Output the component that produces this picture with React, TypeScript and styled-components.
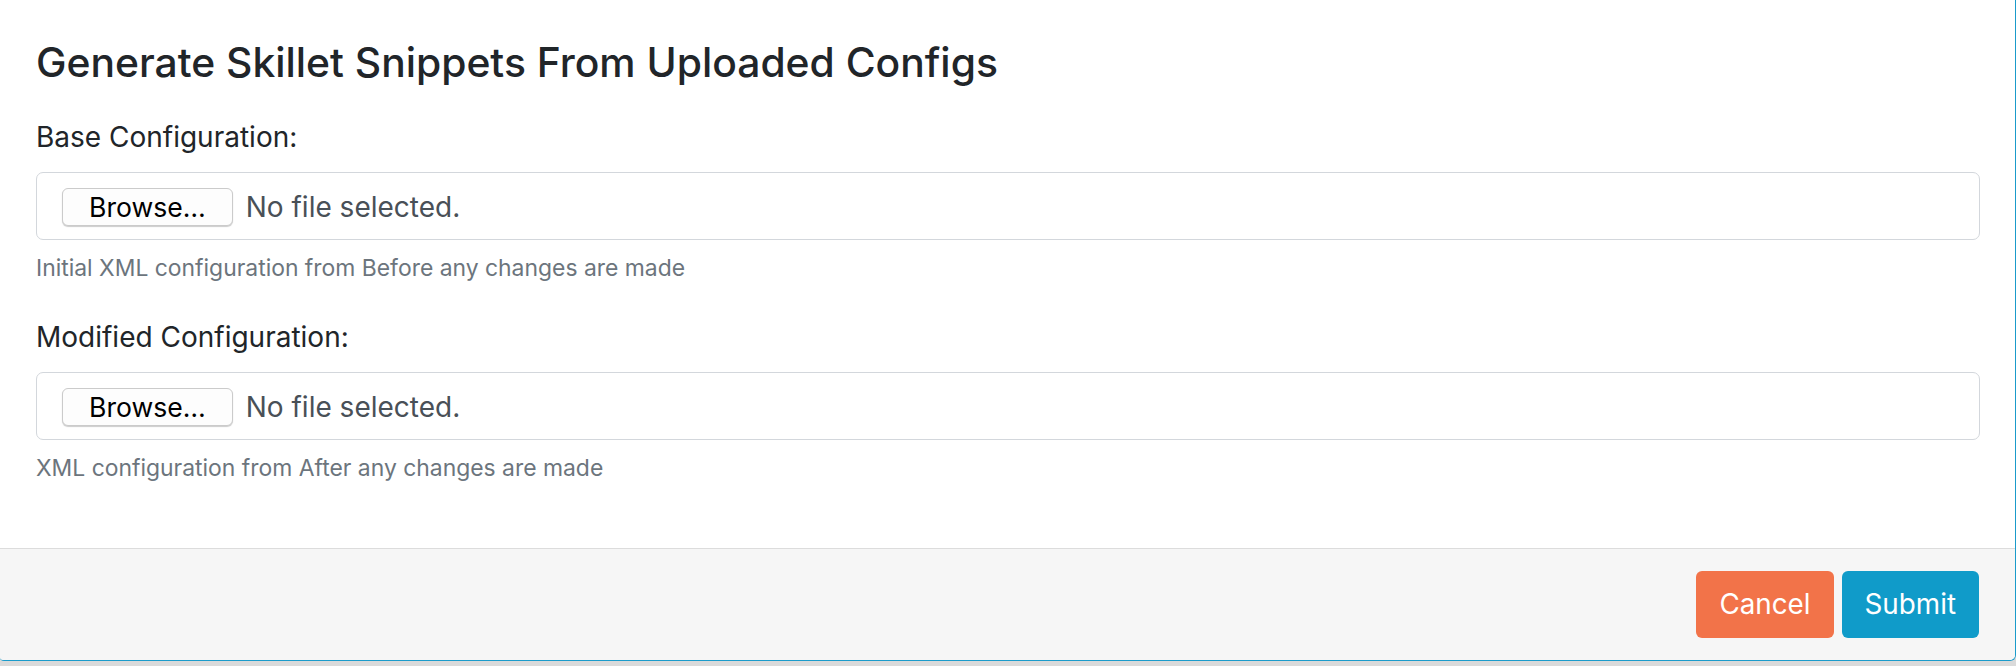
import React from "react";
import styled, { createGlobalStyle } from "styled-components";

const GlobalStyle = createGlobalStyle`
  html, body {
    margin: 0;
    padding: 0;
    background: #dadada;
  }
  body {
    font-family: Inter, "Noto Sans", "Liberation Sans", sans-serif;
    color: #212529;
    -webkit-font-smoothing: antialiased;
  }
  * { box-sizing: border-box; }
`;

const Card = styled.div`
  width: 2016px;
  background: #ffffff;
  border-right: 1px solid #1a9bcb;
  border-bottom: 1px solid #1a9bcb;
  border-bottom-right-radius: 6px;
  border-bottom-left-radius: 4px;
  overflow: hidden;
`;

const Body = styled.div`
  padding: 37.5px 35px 66px 36px;
`;

const Title = styled.h3`
  margin: 0 0 33.5px;
  font-size: 40.8px;
  line-height: 48px;
  font-weight: 500;
  color: #212529;
`;

const Group = styled.div<{ $last?: boolean }>`
  margin-bottom: ${(p) => (p.$last ? "0" : "37px")};
`;

const Label = styled.label`
  display: block;
  font-size: 28px;
  line-height: 36px;
  color: #212529;
  margin-bottom: 17px;
`;

const FileBox = styled.label`
  display: flex;
  align-items: flex-start;
  height: 68px;
  padding: 15px 25px 0;
  border: 1px solid #d3d7dc;
  border-radius: 7px;
  background: #fff;
  cursor: pointer;
`;

const HiddenInput = styled.input`
  display: none;
`;

const BrowseButton = styled.span`
  display: inline-flex;
  align-items: center;
  justify-content: center;
  height: 38px;
  padding: 0 26px;
  border: 1px solid #cbcbcb;
  border-radius: 6px;
  background: #fdfdfd;
  box-shadow: 0 1px 1px rgba(0, 0, 0, 0.2);
  font-size: 26.6px;
  line-height: 38px;
  color: #000;
`;

const FileName = styled.span`
  margin-left: 13px;
  font-size: 28px;
  line-height: 38px;
  color: #495057;
`;

const Help = styled.small`
  display: block;
  margin-top: 14px;
  font-size: 22.9px;
  line-height: 28px;
  color: #6c757d;
`;

const Footer = styled.div`
  display: flex;
  justify-content: flex-end;
  gap: 8px;
  padding: 22px 36px 22px 36px;
  background: #f6f6f6;
  border-top: 1px solid #dcdcdc;
`;

const Button = styled.button<{ $variant: "cancel" | "submit" }>`
  height: 67px;
  padding: 0 23px;
  border: none;
  border-radius: 6px;
  background: ${(p) => (p.$variant === "cancel" ? "#f27349" : "#109bc9")};
  color: #fff;
  font-family: Inter, "Noto Sans", "Liberation Sans", sans-serif;
  font-size: 27.8px;
  line-height: 67px;
  cursor: pointer;
`;

function FileField(props: { id: string; label: string; help: string; last?: boolean }) {
  return (
    <Group $last={props.last}>
      <Label htmlFor={props.id}>{props.label}</Label>
      <FileBox>
        <HiddenInput id={props.id} type="file" />
        <BrowseButton>Browse…</BrowseButton>
        <FileName>No file selected.</FileName>
      </FileBox>
      <Help>{props.help}</Help>
    </Group>
  );
}

export default function App() {
  return (
    <>
      <GlobalStyle />
      <Card>
        <Body>
          <Title>Generate Skillet Snippets From Uploaded Configs</Title>
          <FileField
            id="base"
            label="Base Configuration:"
            help="Initial XML configuration from Before any changes are made"
          />
          <FileField
            id="modified"
            label="Modified Configuration:"
            help="XML configuration from After any changes are made"
            last
          />
        </Body>
        <Footer>
          <Button $variant="cancel">Cancel</Button>
          <Button $variant="submit">Submit</Button>
        </Footer>
      </Card>
    </>
  );
}
